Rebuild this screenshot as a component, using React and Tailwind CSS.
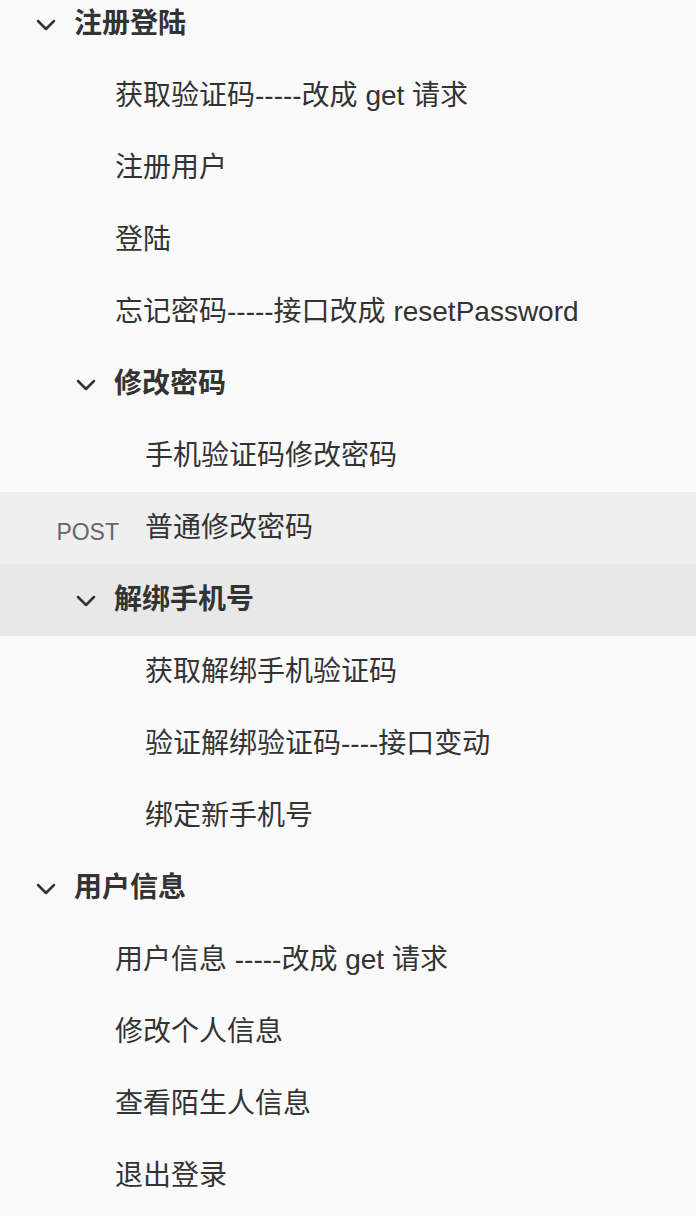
import React from 'react';

const Chevron = () => (
    <svg width="20" height="14" viewBox="0 0 20 14" fill="none" className="shrink-0 mt-[2px]">
        <polyline points="2,3 10,11 18,3" stroke="#333" strokeWidth="2.5" strokeLinecap="round" strokeLinejoin="round" />
    </svg>
);

const rows = [
    { type: 'group', level: 0, text: '注册登陆' },
    { type: 'item', level: 0, text: '获取验证码-----改成 get 请求' },
    { type: 'item', level: 0, text: '注册用户' },
    { type: 'item', level: 0, text: '登陆' },
    { type: 'item', level: 0, text: '忘记密码-----接口改成 resetPassword' },
    { type: 'group', level: 1, text: '修改密码' },
    { type: 'item', level: 1, text: '手机验证码修改密码' },
    { type: 'item', level: 1, text: '普通修改密码', method: 'POST', active: true },
    { type: 'group', level: 1, text: '解绑手机号', hover: true },
    { type: 'item', level: 1, text: '获取解绑手机验证码' },
    { type: 'item', level: 1, text: '验证解绑验证码----接口变动' },
    { type: 'item', level: 1, text: '绑定新手机号' },
    { type: 'group', level: 0, text: '用户信息' },
    { type: 'item', level: 0, text: '用户信息 -----改成 get 请求' },
    { type: 'item', level: 0, text: '修改个人信息' },
    { type: 'item', level: 0, text: '查看陌生人信息' },
    { type: 'item', level: 0, text: '退出登录' },
];

const Row = ({ row }) => {
    const bg = row.active ? 'bg-[#efefef]' : row.hover ? 'bg-[#e8e8e8]' : '';

    if (row.type === 'group') {
        return (
            <div className={`h-[72px] flex items-center ${bg} ${row.level === 0 ? 'pl-[36px]' : 'pl-[76px]'}`}>
                <Chevron />
                <span className="ml-[18px] text-[28px] font-bold text-[#333]">{row.text}</span>
            </div>
        );
    }

    return (
        <div className={`h-[72px] flex items-center ${bg}`}>
            {row.level === 0 ? (
                <div className="w-[115px] shrink-0" />
            ) : (
                <div className="w-[145px] shrink-0 flex justify-end pr-[26px]">
                    {row.method && (
                        <span className="text-[23px] text-[#666] mt-[8px]">{row.method}</span>
                    )}
                </div>
            )}
            <span className="text-[28px] text-[#333] whitespace-nowrap">{row.text}</span>
        </div>
    );
};

const App = () => {
    return (
        <div
            className="w-[696px] h-[1216px] overflow-hidden bg-[#fafafa]"
            style={{ fontFamily: '"Liberation Sans", "Noto Sans CJK SC", sans-serif' }}
        >
            <div className="-mt-[12px]">
                {rows.map((row, i) => (
                    <Row key={i} row={row} />
                ))}
            </div>
        </div>
    );
};

export default App;
